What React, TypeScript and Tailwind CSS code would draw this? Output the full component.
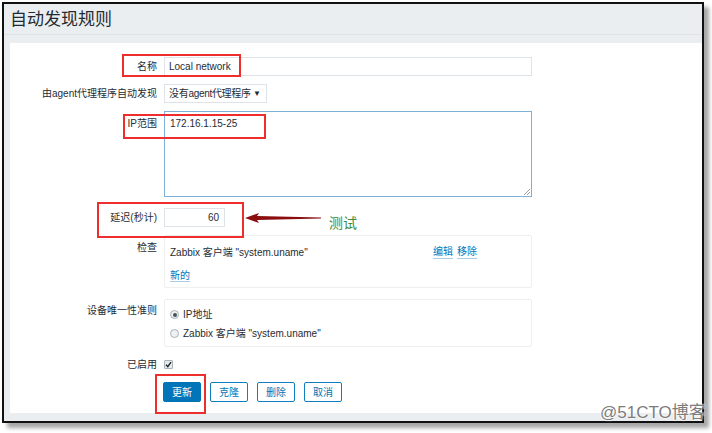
import React from "react";

const font = "font-['Liberation_Sans','Noto_Sans_CJK_SC',sans-serif]";

function Label({ children, className = "" }: { children: React.ReactNode; className?: string }) {
  return (
    <div className={`w-[147px] shrink-0 text-right text-[10px] text-[#1f2c33] whitespace-nowrap ${className}`}>{children}</div>
  );
}

function Radio({ checked, children }: { checked?: boolean; children: React.ReactNode }) {
  return (
    <div className="flex items-center gap-[4px] h-[19px]">
      <span className="w-[9px] h-[9px] rounded-full border border-[#a9b2b8] bg-[#eef0f2] flex items-center justify-center">
        {checked && <span className="w-[4px] h-[4px] rounded-full bg-[#4a5358]" />}
      </span>
      <span>{children}</span>
    </div>
  );
}

function Btn({ children, primary }: { children: React.ReactNode; primary?: boolean }) {
  return (
    <button
      className={
        primary
          ? "w-[38px] h-[20px] rounded-[2px] bg-[#0275b8] border border-[#0275b8] text-white text-[10px]"
          : "w-[38px] h-[20px] rounded-[2px] bg-white border border-[#0f7fc0] text-[#0275b8] text-[10px]"
      }
    >
      {children}
    </button>
  );
}

export default function App() {
  return (
    <div className={`relative w-[712px] h-[433px] bg-white overflow-hidden ${font}`}>
      {/* window frame */}
      <div className="ml-[2px] mt-[2px] w-[702px] h-[421px] border-2 border-[#111] shadow-[5px_5px_4px_rgba(0,0,0,0.35)] bg-[#ebeef0] flex flex-col">
        <div className="h-[31px] shrink-0 pl-[6px] border-b border-[#dde3e6] flex items-center">
          <h1 className="text-[17px] text-[#1f2c33] leading-none">自动发现规则</h1>
        </div>
        <div className="flex-1 ml-[6px] mt-[8px] mb-[8px] bg-white pt-[14px] text-[10px] text-[#1f2c33]">
          {/* 名称 */}
          <div className="flex items-center gap-[7px]">
            <Label>名称</Label>
            <div className="w-[368px] h-[19px] border border-[#dde3e6] flex items-center px-[4px]">Local network</div>
          </div>
          {/* proxy */}
          <div className="flex items-center gap-[7px] mt-[8px]">
            <Label>由agent代理程序自动发现</Label>
            <div className="w-[103px] h-[19px] border border-[#dde3e6] flex items-center justify-between pl-[4px] pr-[5px] whitespace-nowrap">
              <span className="tracking-[-0.3px]">没有agent代理程序</span>
              <span className="text-[8px]">▼</span>
            </div>
          </div>
          {/* IP range */}
          <div className="flex items-start gap-[7px] mt-[8px]">
            <Label className="pt-[5px]">IP范围</Label>
            <div className="relative w-[368px] h-[86px] border-[1.5px] border-[#7fb0d6] px-[5px] pt-[4px]">
              172.16.1.15-25
              <svg className="absolute right-[1px] bottom-[1px]" width="7" height="7" viewBox="0 0 7 7">
                <path d="M1 7 L7 1 M4 7 L7 4" stroke="#9aa3a8" strokeWidth="1" />
              </svg>
            </div>
          </div>
          {/* delay */}
          <div className="flex items-center gap-[7px] mt-[11px]">
            <Label>延迟(秒计)</Label>
            <div className="w-[61px] h-[19px] border border-[#dde3e6] flex items-center justify-end px-[5px]">60</div>
          </div>
          {/* checks */}
          <div className="flex items-start gap-[7px] mt-[8px]">
            <Label className="pt-[5px]">检查</Label>
            <div className="w-[368px] h-[53px] border border-[#eeeeee] rounded-[2px] pl-[5px] pt-[9px]">
              <div className="flex items-center">
                <span className="w-[263px]">Zabbix 客户端 "system.uname"</span>
                <a className="text-[#0275b8] border-b border-[#a9cde6] leading-[12px]">编辑</a>
                <a className="ml-[4px] text-[#0275b8] border-b border-[#a9cde6] leading-[12px]">移除</a>
              </div>
              <div className="mt-[8px]">
                <a className="text-[#0275b8] border-b border-[#a9cde6] leading-[12px]">新的</a>
              </div>
            </div>
          </div>
          {/* uniqueness criteria */}
          <div className="flex items-start gap-[7px] mt-[11px]">
            <Label className="pt-[4px]">设备唯一性准则</Label>
            <div className="w-[368px] h-[48px] border border-[#eeeeee] rounded-[2px] pl-[5px] pt-[5px]">
              <Radio checked>IP地址</Radio>
              <Radio>Zabbix 客户端 "system.uname"</Radio>
            </div>
          </div>
          {/* enabled */}
          <div className="flex items-center gap-[7px] mt-[8px] h-[19px]">
            <Label>已启用</Label>
            <span className="w-[9px] h-[9px] rounded-[1px] border border-[#a9b2b8] bg-[#e6e9eb] flex items-center justify-center">
              <svg width="7" height="7" viewBox="0 0 7 7">
                <path d="M1 3.8 L2.8 5.6 L6 1.2" stroke="#222" strokeWidth="1.4" fill="none" />
              </svg>
            </span>
          </div>
          {/* actions */}
          <div className="flex gap-[9px] mt-[8px] pl-[153px]">
            <Btn primary>更新</Btn>
            <Btn>克隆</Btn>
            <Btn>删除</Btn>
            <Btn>取消</Btn>
          </div>
        </div>
      </div>

      {/* annotation boxes */}
      <div className="absolute left-[122px] top-[54px] w-[119px] h-[23px] border-2 border-[#ee2d2d]" />
      <div className="absolute left-[123px] top-[114px] w-[143px] h-[25px] border-2 border-[#ee2d2d]" />
      <div className="absolute left-[97px] top-[202px] w-[147px] h-[36px] border-2 border-[#ee2d2d]" />
      <div className="absolute left-[155px] top-[374px] w-[51px] h-[40px] border-2 border-[#ee2d2d]" />

      {/* arrow + note */}
      <svg className="absolute left-[245px] top-[212px]" width="76" height="12" viewBox="0 0 76 12">
        <polygon points="0,6 14,1 12,4 76,5.5 76,6.5 12,8 14,11" fill="#8b0d0d" />
      </svg>
      <div className="absolute left-[329px] top-[216px] text-[14px] leading-none text-[#3d8b3d]">测试</div>

      {/* watermark */}
      <div className="absolute left-[600px] top-[404px] text-[17px] leading-none text-[#7d7d7d] [text-shadow:0_0_2px_#fff,0_0_2px_#fff]">
        @51CTO博客
      </div>
    </div>
  );
}
